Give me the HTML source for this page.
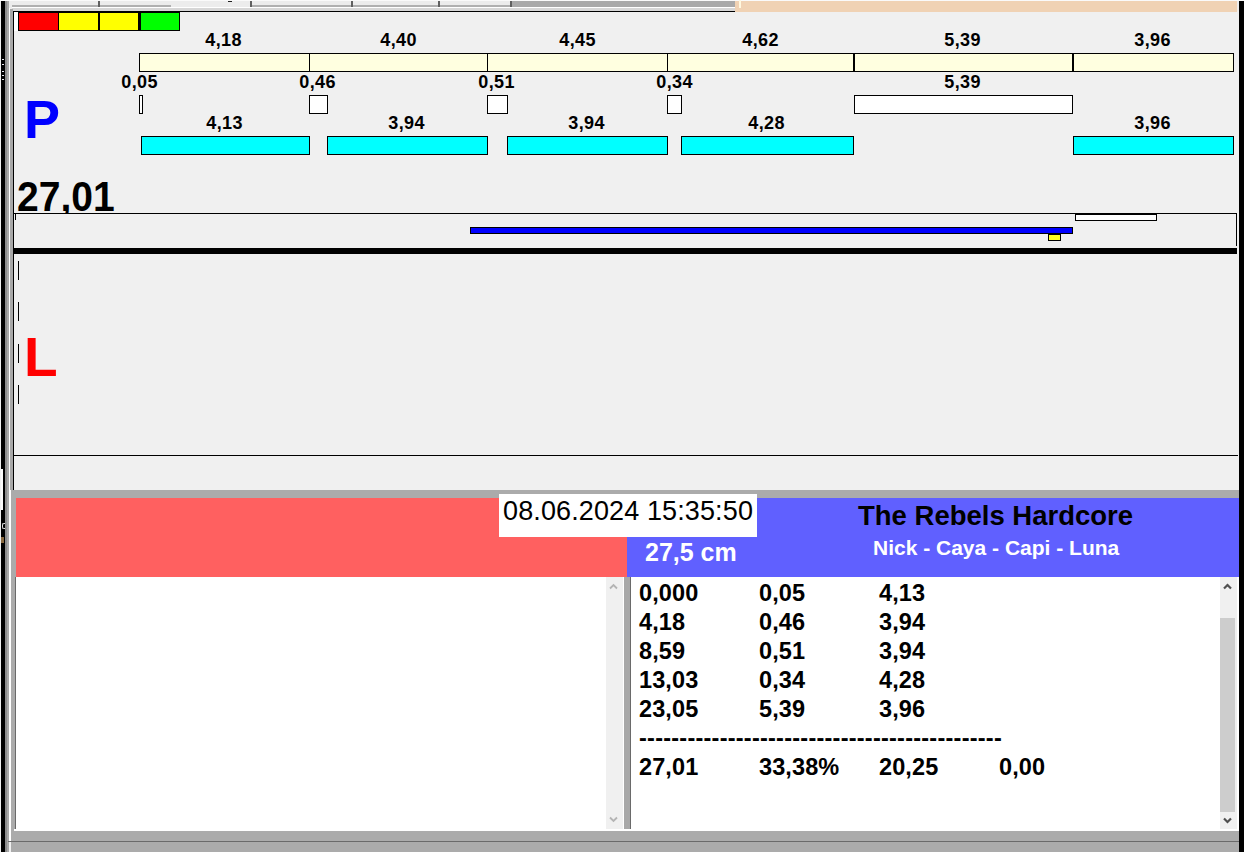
<!DOCTYPE html>
<html><head><meta charset="utf-8">
<style>
*{margin:0;padding:0;box-sizing:border-box}
html,body{width:1244px;height:852px;overflow:hidden;background:#f0f0f0;font-family:"Liberation Sans",sans-serif}
.a{position:absolute}
.lbl{position:absolute;font-weight:bold;font-size:18px;line-height:18px;color:#000;white-space:nowrap;width:60px;text-align:center;letter-spacing:0.4px;margin-left:0.6px}
.cr{position:absolute;background:#ffffe0;border:1px solid #000;height:19px;top:53px}
.wb{position:absolute;background:#fff;border:1px solid #000;height:19px;top:95px}
.cy{position:absolute;background:#00ffff;border:1px solid #000;height:19px;top:136px}
.tk{position:absolute;left:18px;width:1px;height:19px;background:#000}
.row{position:absolute;left:639px;margin-top:1px;font-weight:bold;font-size:23.5px;line-height:29px;color:#000;white-space:nowrap;letter-spacing:0.1px}
.row span{position:absolute;top:0}
</style></head><body>
<!-- top strip -->
<div class="a" style="left:0;top:0;width:1244px;height:11px;background:#ececec"></div>
<div class="a" style="left:0;top:0;width:1244px;height:1px;background:#fafafa"></div>
<div class="a" style="left:12px;top:5px;width:159px;height:2px;background:#b0b0b0"></div>
<div class="a" style="left:252px;top:5px;width:260px;height:2px;background:#b0b0b0"></div>
<div class="a" style="left:512px;top:1px;width:223px;height:6px;background:#a9a9a9"></div>
<div class="a" style="left:12px;top:7px;width:723px;height:1px;background:#ffffff"></div>
<div class="a" style="left:12px;top:8px;width:723px;height:3px;background:#d6d6d6"></div>
<div class="a" style="left:98px;top:1px;width:2px;height:6px;background:#606060"></div>
<div class="a" style="left:250px;top:1px;width:2px;height:6px;background:#606060"></div>
<div class="a" style="left:351px;top:1px;width:2px;height:6px;background:#606060"></div>
<div class="a" style="left:438px;top:1px;width:2px;height:6px;background:#606060"></div>
<div class="a" style="left:510px;top:1px;width:2px;height:6px;background:#606060"></div>
<div class="a" style="left:228px;top:1px;width:4px;height:1px;background:#202020"></div>
<div class="a" style="left:735px;top:1px;width:502px;height:11px;background:#f0d2b4"></div>
<div class="a" style="left:739px;top:0;width:2px;height:8px;background:#fff8e0"></div>
<!-- left edge -->
<div class="a" style="left:1px;top:1px;width:4px;height:851px;background:#000"></div>
<div class="a" style="left:5px;top:1px;width:2px;height:851px;background:#8c8c8c"></div><div class="a" style="left:7px;top:1px;width:2px;height:851px;background:#a8a8a8"></div>
<div class="a" style="left:9px;top:8px;width:1px;height:833px;background:#fff"></div><div class="a" style="left:10px;top:490px;width:1px;height:351px;background:#fff"></div>
<div class="a" style="left:10px;top:9px;width:3px;height:481px;background:#a8a8a8"></div>
<div class="a" style="left:1px;top:469px;width:2px;height:41px;background:#fafafa"></div>
<div class="a" style="left:2px;top:59px;width:2px;height:1px;background:#e8e8f0"></div><div class="a" style="left:2px;top:64px;width:2px;height:1px;background:#e8e8f0"></div><div class="a" style="left:2px;top:71px;width:2px;height:1px;background:#e8e8f0"></div><div class="a" style="left:2px;top:75px;width:2px;height:1px;background:#e8e8f0"></div><div class="a" style="left:2px;top:79px;width:2px;height:1px;background:#e8e8f0"></div><div class="a" style="left:2px;top:523px;width:3px;height:6px;border:1px solid #e0e0e0;border-right:none;border-radius:2px 0 0 2px"></div><div class="a" style="left:1px;top:537px;width:3px;height:6px;background:#8a6a40"></div>
<!-- right edge -->
<div class="a" style="left:1239px;top:1px;width:5px;height:851px;background:#000"></div>
<!-- P panel -->
<div class="a" style="left:13px;top:11px;width:722px;height:1px;background:#000"></div>
<div class="a" style="left:13px;top:11px;width:1px;height:479px;background:#000"></div>
<div class="a" style="left:14px;top:12px;width:4px;height:19px;background:#fff"></div>
<!-- traffic light -->
<div class="a" style="left:18px;top:11px;width:162px;height:20px;background:#000"></div>
<div class="a" style="left:19px;top:13px;width:39px;height:17px;background:#ff0000"></div>
<div class="a" style="left:59px;top:13px;width:39px;height:17px;background:#ffff00"></div>
<div class="a" style="left:100px;top:13px;width:38px;height:17px;background:#ffff00"></div>
<div class="a" style="left:141px;top:13px;width:38px;height:17px;background:#00ff00"></div>

<!-- row1 cream -->
<div class="cr" style="left:139px;width:171px"></div>
<div class="cr" style="left:309px;width:179px"></div>
<div class="cr" style="left:487px;width:181px"></div>
<div class="cr" style="left:667px;width:187px"></div>
<div class="cr" style="left:854px;width:219px"></div>
<div class="cr" style="left:1073px;width:161px"></div>
<div class="lbl" style="left:193px;top:31px">4,18</div>
<div class="lbl" style="left:368px;top:31px">4,40</div>
<div class="lbl" style="left:547px;top:31px">4,45</div>
<div class="lbl" style="left:730px;top:31px">4,62</div>
<div class="lbl" style="left:932px;top:31px">5,39</div>
<div class="lbl" style="left:1122px;top:31px">3,96</div>
<!-- row2 white -->
<div class="wb" style="left:139px;width:4px"></div>
<div class="wb" style="left:309px;width:19px"></div>
<div class="wb" style="left:487px;width:21px"></div>
<div class="wb" style="left:667px;width:15px"></div>
<div class="wb" style="left:854px;width:219px"></div>
<div class="lbl" style="left:109px;top:73px">0,05</div>
<div class="lbl" style="left:287px;top:73px">0,46</div>
<div class="lbl" style="left:466px;top:73px">0,51</div>
<div class="lbl" style="left:644px;top:73px">0,34</div>
<div class="lbl" style="left:932px;top:73px">5,39</div>
<!-- row3 cyan -->
<div class="cy" style="left:141px;width:169px"></div>
<div class="cy" style="left:327px;width:161px"></div>
<div class="cy" style="left:507px;width:161px"></div>
<div class="cy" style="left:681px;width:173px"></div>
<div class="cy" style="left:1073px;width:161px"></div>
<div class="lbl" style="left:194px;top:114px">4,13</div>
<div class="lbl" style="left:376px;top:114px">3,94</div>
<div class="lbl" style="left:556px;top:114px">3,94</div>
<div class="lbl" style="left:736px;top:114px">4,28</div>
<div class="lbl" style="left:1122px;top:114px">3,96</div>

<div class="a" style="left:24px;top:92px;font-size:54px;line-height:54px;font-weight:bold;color:#0000ff">P</div>
<div class="a" style="left:0;top:170px;width:200px;height:43px;overflow:hidden"><div class="a" style="left:17px;top:6px;font-size:42px;line-height:42px;font-weight:bold;color:#000;transform:scaleX(0.93);transform-origin:0 0">27,01</div></div>

<!-- lower box of P panel -->
<div class="a" style="left:13px;top:213px;width:1224px;height:1px;background:#000"></div>
<div class="a" style="left:15px;top:213px;width:1px;height:7px;background:#000"></div>
<div class="a" style="left:1236px;top:213px;width:1px;height:33px;background:#000"></div>
<div class="a" style="left:1075px;top:213px;width:82px;height:8px;background:#fff;border:1px solid #000;border-top-width:2px"></div>
<div class="a" style="left:470px;top:227px;width:603px;height:7px;background:#0000ff;border:1px solid #000"></div>
<div class="a" style="left:1048px;top:234px;width:13px;height:7px;background:#ffff22;border:1px solid #000"></div>
<div class="a" style="left:13px;top:248px;width:1224px;height:6px;background:#000"></div>

<!-- L panel -->
<div class="tk" style="top:261px"></div>
<div class="tk" style="top:302px"></div>
<div class="tk" style="top:344px"></div>
<div class="tk" style="top:385px"></div>
<div class="a" style="left:24px;top:330px;font-size:55px;line-height:55px;font-weight:bold;color:#ff0000">L</div>
<div class="a" style="left:13px;top:455px;width:1225px;height:1px;background:#000"></div>

<!-- bottom area -->
<div class="a" style="left:11px;top:490px;width:1228px;height:362px;background:#ababab"></div>
<div class="a" style="left:16px;top:498px;width:611px;height:79px;background:#ff6060"></div>
<div class="a" style="left:627px;top:498px;width:612px;height:79px;background:#6060ff"></div>
<div class="a" style="left:499px;top:494px;width:258px;height:43px;background:#fff"></div>
<div class="a" style="left:503px;top:497px;font-size:27px;line-height:27px;color:#000;letter-spacing:0.12px;transform:scaleY(1.055);transform-origin:0 0">08.06.2024 15:35:50</div>
<div class="a" style="left:645px;top:540px;font-size:25px;line-height:25px;font-weight:bold;color:#fff">27,5 cm</div>
<div class="a" style="left:858px;top:502px;font-size:27.5px;line-height:27.5px;font-weight:bold;color:#000">The Rebels Hardcore</div>
<div class="a" style="left:873px;top:537px;font-size:21px;line-height:21px;font-weight:bold;color:#fff">Nick - Caya - Capi - Luna</div>

<!-- left list -->
<div class="a" style="left:16px;top:577px;width:608px;height:252px;background:#fff"></div>
<div class="a" style="left:606px;top:577px;width:17px;height:252px;background:#f0f0f0"></div>
<div class="a" style="left:623px;top:577px;width:1px;height:252px;background:#fff"></div><div class="a" style="left:624px;top:577px;width:6px;height:253px;background:#a8a8a8"></div><div class="a" style="left:630px;top:577px;width:1px;height:253px;background:#6a6a6a"></div>
<div class="a" style="left:15px;top:577px;width:1px;height:252px;background:#6a6a6a"></div>
<!-- right list -->
<div class="a" style="left:631px;top:577px;width:608px;height:252px;background:#fff"></div>
<div class="a" style="left:1220px;top:577px;width:17px;height:252px;background:#f0f0f0"></div>
<div class="a" style="left:1220px;top:618px;width:15px;height:194px;background:#cdcdcd"></div>
<div class="a" style="left:14px;top:829px;width:1225px;height:2px;background:#fff"></div>
<div class="a" style="left:8px;top:841px;width:1231px;height:1px;background:#6a6a6a"></div>
<!-- scroll arrows -->
<svg class="a" style="left:1223px;top:582px" width="10" height="8"><path d="M1 6.5 L4.5 3 L8 6.5" stroke="#505050" stroke-width="2.2" fill="none"/></svg>
<svg class="a" style="left:1223px;top:817px" width="10" height="8"><path d="M1 1.5 L4.5 5 L8 1.5" stroke="#505050" stroke-width="2.2" fill="none"/></svg>
<svg class="a" style="left:609px;top:582px" width="10" height="8"><path d="M1 6.5 L4.5 3 L8 6.5" stroke="#b4b4b4" stroke-width="1.8" fill="none"/></svg>
<svg class="a" style="left:609px;top:816px" width="10" height="8"><path d="M1 1.5 L4.5 5 L8 1.5" stroke="#b4b4b4" stroke-width="1.8" fill="none"/></svg>

<div class="row" style="top:578px"><span style="left:0">0,000</span><span style="left:120px">0,05</span><span style="left:240px">4,13</span></div>
<div class="row" style="top:607px"><span style="left:0">4,18</span><span style="left:120px">0,46</span><span style="left:240px">3,94</span></div>
<div class="row" style="top:636px"><span style="left:0">8,59</span><span style="left:120px">0,51</span><span style="left:240px">3,94</span></div>
<div class="row" style="top:665px"><span style="left:0">13,03</span><span style="left:120px">0,34</span><span style="left:240px">4,28</span></div>
<div class="row" style="top:694px"><span style="left:0">23,05</span><span style="left:120px">5,39</span><span style="left:240px">3,96</span></div>
<div class="row" style="top:723px"><span style="left:0;letter-spacing:0.24px">---------------------------------------------</span></div>
<div class="row" style="top:752px"><span style="left:0">27,01</span><span style="left:120px">33,38%</span><span style="left:240px">20,25</span><span style="left:360px">0,00</span></div>
</body></html>
